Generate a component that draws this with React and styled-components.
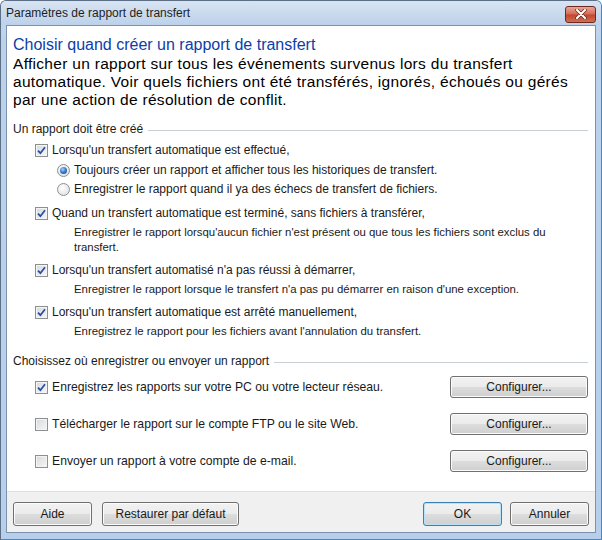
import React from "react";
import styled, { createGlobalStyle } from "styled-components";

const GlobalStyle = createGlobalStyle`
  html, body {
    margin: 0;
    padding: 0;
    background: #ffffff;
  }
  body {
    font-family: "Liberation Sans", Arial, sans-serif;
    font-size: 12px;
    color: #000;
  }
`;

const Window = styled.div`
  width: 602px;
  height: 540px;
  box-sizing: border-box;
  display: flex;
  flex-direction: column;
  background: linear-gradient(#c9daee, #bcd2ec 40px, #b7cfeb);
  border: 1px solid #5b6f86;
  border-right-color: #2f8fd0;
  border-bottom-color: #2f8fd0;
  border-radius: 6px 6px 0 0;
  padding: 0 5px 6px 5px;
`;

const TitleBar = styled.div`
  height: 24px;
  display: flex;
  align-items: center;
  justify-content: space-between;
  background: linear-gradient(#d8e4f2, #bdd1ea);
  margin: 0 -5px;
  padding: 0 5px;
  border-radius: 5px 5px 0 0;
`;

const TitleText = styled.span`
  font-size: 12px;
  color: #1e1e1e;
`;

const CloseButton = styled.div`
  width: 31px;
  height: 17px;
  margin-top: 2px;
  box-sizing: border-box;
  border: 1px solid #6e2a22;
  border-radius: 3px;
  background: linear-gradient(#e9a597, #d46a55 48%, #c2452f 52%, #d0704f);
  display: flex;
  align-items: center;
  justify-content: center;
`;

const Client = styled.div`
  flex: 1;
  display: flex;
  flex-direction: column;
  background: #ffffff;
  border: 1px solid #7d93ad;
  min-height: 0;
`;

const Body = styled.div`
  flex: 1;
  padding: 9px 7px 0 6px;
`;

const Heading = styled.div`
  font-size: 16px;
  line-height: 20px;
  color: #0c3ea8;
`;

const Description = styled.div`
  font-size: 15.5px;
  line-height: 18px;
  letter-spacing: 0.3px;
  color: #000;
`;

const SectionHeader = styled.div`
  display: flex;
  align-items: center;
  gap: 5px;
  margin-top: ${(p) => p.$mt}px;
  height: 14px;
  line-height: 14px;
  color: #1a1a1a;
  white-space: nowrap;

  &::after {
    content: "";
    flex: 1;
    height: 0;
    border-top: 1px solid #c8cfd6;
    margin-top: 2px;
  }
`;

const OptionRow = styled.div`
  display: flex;
  align-items: center;
  gap: 4px;
  height: 16px;
  margin-top: ${(p) => p.$mt}px;
  margin-left: ${(p) => p.$indent}px;
  color: #1a1a1a;
  white-space: nowrap;
`;

const SubText = styled.div`
  margin-top: 4px;
  margin-left: 61px;
  font-size: 11.4px;
  line-height: 15px;
  color: #1a1a1a;
  max-width: 485px;
`;

const DestRow = styled.div`
  display: flex;
  align-items: center;
  justify-content: space-between;
  margin-top: ${(p) => p.$mt}px;
  margin-left: 22px;
  height: 22px;
`;

const DestLabel = styled.div`
  display: flex;
  align-items: center;
  gap: 4px;
  font-size: 12.2px;
  color: #1a1a1a;
`;

const Box = styled.span`
  width: 13px;
  height: 13px;
  box-sizing: border-box;
  border: 1px solid #8e8f8f;
  background: linear-gradient(135deg, #d6d9dd, #f7f7f7);
  box-shadow: inset 0 0 0 1px #f4f4f4;
  display: inline-flex;
  align-items: center;
  justify-content: center;
  flex-shrink: 0;
`;

const RadioCircle = styled.span`
  width: 13px;
  height: 13px;
  box-sizing: border-box;
  border-radius: 50%;
  border: 1px solid #8e8f8f;
  background: radial-gradient(circle at 40% 35%, #ffffff, #d9dbde);
  display: inline-flex;
  align-items: center;
  justify-content: center;
  flex-shrink: 0;
`;

const RadioDot = styled.span`
  width: 7px;
  height: 7px;
  border-radius: 50%;
  background: radial-gradient(circle at 40% 35%, #9fd3ff, #2f6fc2 55%, #14407f);
`;

const Button = styled.button`
  font-family: "Liberation Sans", Arial, sans-serif;
  font-size: 12px;
  color: #1a1a1a;
  width: ${(p) => p.$w}px;
  height: ${(p) => p.$h || 23}px;
  box-sizing: border-box;
  padding: 0;
  border: 1px solid ${(p) => (p.$default ? "#3c7fb1" : "#707070")};
  border-radius: 3px;
  background: linear-gradient(#f2f2f2, #ebebeb 50%, #dddddd 50%, #cfcfcf);
  box-shadow: inset 0 0 0 1px ${(p) => (p.$default ? "#b8e2f7" : "#fbfbfb")};
  cursor: default;
`;

const Footer = styled.div`
  border-top: 1px solid #dfdfdf;
  background: #f0f0f0;
  height: 41px;
  box-sizing: border-box;
  padding: 10px 6px 0 6px;
  display: flex;
  align-items: flex-start;
  gap: 10px;
`;

const ButtonGroup = styled.div`
  display: flex;
  gap: 8px;
  margin-left: auto;
`;

function Check({ checked }) {
  return (
    <Box>
      {checked && (
        <svg width="9" height="9" viewBox="0 0 9 9">
          <path
            d="M1 4.6 L3.4 7.2 L8 1.2"
            fill="none"
            stroke="#2a4ea6"
            strokeWidth="1.8"
          />
        </svg>
      )}
    </Box>
  );
}

function Radio({ checked }) {
  return <RadioCircle>{checked && <RadioDot />}</RadioCircle>;
}

export default function App() {
  return (
    <>
      <GlobalStyle />
      <Window>
        <TitleBar>
          <TitleText>Paramètres de rapport de transfert</TitleText>
          <CloseButton>
            <svg width="12" height="10" viewBox="0 0 12 10">
              <path
                d="M2 1 L10 9 M10 1 L2 9"
                stroke="#5a1a12"
                strokeWidth="3.4"
                strokeLinecap="round"
              />
              <path
                d="M2 1 L10 9 M10 1 L2 9"
                stroke="#ffffff"
                strokeWidth="2.2"
                strokeLinecap="round"
              />
            </svg>
          </CloseButton>
        </TitleBar>
        <Client>
          <Body>
            <Heading>Choisir quand créer un rapport de transfert</Heading>
            <Description>
              Afficher un rapport sur tous les événements survenus lors du transfert
              <br />
              automatique. Voir quels fichiers ont été transférés, ignorés, échoués ou gérés
              <br />
              par une action de résolution de conflit.
            </Description>

            <SectionHeader $mt={13}>Un rapport doit être créé</SectionHeader>

            <OptionRow $mt={6} $indent={22}>
              <Check checked />
              Lorsqu'un transfert automatique est effectué,
            </OptionRow>
            <OptionRow $mt={4} $indent={44}>
              <Radio checked />
              Toujours créer un rapport et afficher tous les historiques de transfert.
            </OptionRow>
            <OptionRow $mt={3} $indent={44}>
              <Radio />
              Enregistrer le rapport quand il ya des échecs de transfert de fichiers.
            </OptionRow>

            <OptionRow $mt={8} $indent={22}>
              <Check checked />
              Quand un transfert automatique est terminé, sans fichiers à transférer,
            </OptionRow>
            <SubText>
              Enregistrer le rapport lorsqu'aucun fichier n'est présent ou que tous les fichiers sont exclus du transfert.
            </SubText>

            <OptionRow $mt={7} $indent={22}>
              <Check checked />
              Lorsqu'un transfert automatisé n'a pas réussi à démarrer,
            </OptionRow>
            <SubText>
              Enregistrer le rapport lorsque le transfert n'a pas pu démarrer en raison d'une exception.
            </SubText>

            <OptionRow $mt={7} $indent={22}>
              <Check checked />
              Lorsqu'un transfert automatique est arrêté manuellement,
            </OptionRow>
            <SubText>
              Enregistrez le rapport pour les fichiers avant l'annulation du transfert.
            </SubText>

            <SectionHeader $mt={15}>Choisissez où enregistrer ou envoyer un rapport</SectionHeader>

            <DestRow $mt={8}>
              <DestLabel>
                <Check checked />
                Enregistrez les rapports sur votre PC ou votre lecteur réseau.
              </DestLabel>
              <Button $w={138} $h={22}>Configurer...</Button>
            </DestRow>
            <DestRow $mt={15}>
              <DestLabel>
                <Check />
                Télécharger le rapport sur le compte FTP ou le site Web.
              </DestLabel>
              <Button $w={138} $h={22}>Configurer...</Button>
            </DestRow>
            <DestRow $mt={15}>
              <DestLabel>
                <Check />
                Envoyer un rapport à votre compte de e-mail.
              </DestLabel>
              <Button $w={138} $h={22}>Configurer...</Button>
            </DestRow>
          </Body>
          <Footer>
            <Button $w={79} $h={24}>Aide</Button>
            <Button $w={137} $h={24}>Restaurer par défaut</Button>
            <ButtonGroup>
              <Button $w={79} $h={24} $default>OK</Button>
              <Button $w={79} $h={24}>Annuler</Button>
            </ButtonGroup>
          </Footer>
        </Client>
      </Window>
    </>
  );
}
